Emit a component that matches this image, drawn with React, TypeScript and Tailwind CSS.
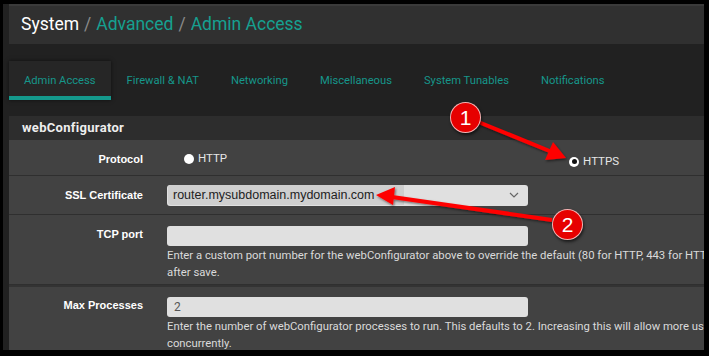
import React from "react";

const tabs = ["Admin Access", "Firewall & NAT", "Networking", "Miscellaneous", "System Tunables", "Notifications"];

function Radio({ checked, label }: { checked?: boolean; label: string }) {
  return (
    <span className="inline-flex items-center gap-[4px] text-[11.5px] text-[#e6e6e6]">
      <span className="flex h-[10px] w-[10px] items-center justify-center rounded-full bg-white">
        {checked && <span className="h-[5px] w-[5px] rounded-full bg-[#111]" />}
      </span>
      {label}
    </span>
  );
}

function Row({ label, children, className }: { label: string; children: React.ReactNode; className: string }) {
  return (
    <div className={`flex border-b border-[#2f2f2f] ${className}`}>
      <div className="w-[134px] shrink-0 text-right text-[11px] font-bold text-white [font-family:'Liberation_Sans',Arial,sans-serif]">
        {label}
      </div>
      <div className="ml-[24px] min-w-0 flex-1">{children}</div>
    </div>
  );
}

function Badge({ n }: { n: number }) {
  return (
    <div className="flex h-[31px] w-[31px] items-center justify-center rounded-full border border-white/70 bg-[#e60000] text-[21px] text-white shadow-[1px_2px_3px_rgba(0,0,0,0.6)] [font-family:'Liberation_Sans',Arial,sans-serif]">
      {n}
    </div>
  );
}

export default function App() {
  return (
    <div className="relative h-[356px] w-[709px] overflow-hidden bg-black pb-[6px] pl-[3px] pr-[5px] pt-[4px] [font-family:Roboto,'Liberation_Sans',sans-serif]">
      <div className="h-full overflow-hidden bg-[#212121] pl-[6px]">
        {/* titulo */}
        <div className="flex h-[40px] items-center gap-[5px] border-t-2 border-[#3a3a3a] bg-[#303030] pb-[2px] pl-[12px] text-[17.5px]">
          <span className="text-white">System</span>
          <span className="text-[#8a8a8a]">/</span>
          <span className="text-[#16a090]">Advanced</span>
          <span className="text-[#8a8a8a]">/</span>
          <span className="text-[#16a090]">Admin Access</span>
        </div>

        {/* pestañas */}
        <div className="mt-[17px] flex h-[39px]">
          {tabs.map((t, i) => (
            <div
              key={t}
              className={`flex items-center border-b-4 px-[16px] pt-[5px] text-[11.2px] text-[#16968a] ${
                i === 0
                  ? "border-[#14998c] bg-[#262626] pl-[15px] pr-[15px] shadow-[0_0_4px_rgba(0,0,0,0.6)]"
                  : "border-transparent"
              }`}
            >
              {t}
            </div>
          ))}
        </div>

        {/* panel */}
        <div className="mt-[16px] w-[740px] bg-[#424242]">
          <div className="flex h-[24px] items-center bg-[#2d2d2d] pl-[13px] text-[13px] font-bold tracking-[0.3px] text-[#eeeeee]">
            webConfigurator
          </div>
          <Row label="Protocol" className="h-[36px] items-center pt-[3px]">
            <div className="flex">
              <span className="ml-[17px]">
                <Radio label="HTTP" />
              </span>
              <span className="ml-[342px]">
                <Radio checked label="HTTPS" />
              </span>
            </div>
          </Row>
          <Row label="SSL Certificate" className="h-[39px] items-center">
            <div className="flex h-[21px] w-[361px] items-center justify-between rounded-[3px] bg-[#e0e0e0] pl-[1px] pr-[9px] text-[12.5px] text-[#222] [font-family:'Liberation_Sans',Arial,sans-serif]">
              <span className="flex h-[20px] items-center rounded-l-[3px] bg-[#cfcfcf] pl-[5px] pr-[30px]">
                router.mysubdomain.mydomain.com
              </span>
              <svg width="10" height="6" viewBox="0 0 10 6" fill="none" stroke="#666" strokeWidth="1.2">
                <path d="M1 1l4 4 4-4" />
              </svg>
            </div>
          </Row>
          <Row label="TCP port" className="h-[70px] items-start pt-[11px]">
            <div>
              <div className="mb-[1px] h-[20px] w-[361px] rounded-[3px] bg-[#e0e0e0]" />
              <p className="whitespace-nowrap text-[11.3px] leading-[17px] text-[#dadada]">
                Enter a custom port number for the webConfigurator above to override the default (80 for HTTP, 443 for HTTPS). Changes will take effect immediately
                <br />
                after save.
              </p>
            </div>
          </Row>
          <Row label="Max Processes" className="h-[70px] items-start border-t-2 border-t-[#333] pt-[10px]">
            <div>
              <div className="mb-[1px] flex h-[20px] w-[361px] items-center rounded-[3px] bg-[#e0e0e0] pl-[7px] text-[12px] text-[#555]">2</div>
              <p className="whitespace-nowrap text-[11.3px] leading-[17px] text-[#dadada]">
                Enter the number of webConfigurator processes to run. This defaults to 2. Increasing this will allow more users/browsers to access the GUI
                <br />
                concurrently.
              </p>
            </div>
          </Row>
        </div>
      </div>

      {/* anotaciones */}
      <svg className="pointer-events-none absolute left-0 top-0" width="709" height="356">
        <defs>
          <filter id="sh" x="-10%" y="-50%" width="130%" height="200%">
            <feDropShadow dx="1" dy="1.5" stdDeviation="1" floodColor="#000" floodOpacity="0.5" />
          </filter>
        </defs>
        <g filter="url(#sh)" fill="#f00" stroke="#f00">
          <line x1="476" y1="121" x2="552" y2="152" strokeWidth="4" />
          <polygon points="566,158 545,160 553,142" stroke="none" />
          <line x1="552" y1="220" x2="392" y2="197" strokeWidth="4" />
          <polygon points="376,195 395,187 393,205" stroke="none" />
        </g>
      </svg>
      <div className="absolute left-[450px] top-[102px]">
        <Badge n={1} />
      </div>
      <div className="absolute left-[552px] top-[209px]">
        <Badge n={2} />
      </div>
    </div>
  );
}
